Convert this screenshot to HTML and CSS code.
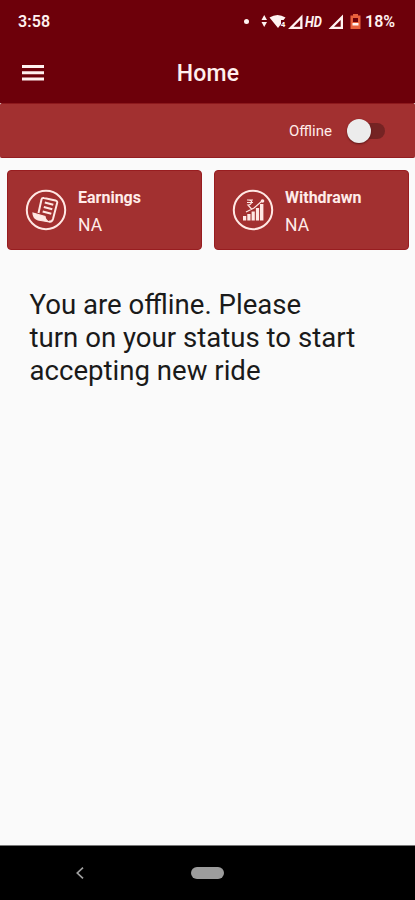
FILE: index.html
```html
<!DOCTYPE html>
<html lang="en">
<head>
<meta charset="utf-8">
<title>Home</title>
<link rel="stylesheet" href="styles.css">
</head>
<body>
<div class="screen">
  <header class="top">
    <div class="status">
      <span class="clock">3:58</span>
      <svg class="signals" width="122" height="20" viewBox="0 0 122 20" fill="#fff3f1">
        <circle cx="7.5" cy="10.5" r="2.5"/>
        <path d="M22.5 9L25.2 4L28 9ZM22.5 11L25.2 16L28 11Z"/>
        <path d="M30.5 6.4Q38.5 1.4 46.5 6.4L44.5 9H42V13L39 17Z"/>
        <text class="wifi-num" x="41.8" y="16">4</text>
        <path fill-rule="evenodd" d="M63.5 3.5V18H49ZM61.2 9L54.5 15.8H61.2Z"/>
        <text class="hd" x="66" y="16" textLength="17" lengthAdjust="spacingAndGlyphs">HD</text>
        <path fill-rule="evenodd" d="M104 3.5V18H89.5ZM101.7 9L95 15.8H101.7Z"/>
        <path class="battery" fill-rule="evenodd" d="M114 3H119V4.5H121.5V18H111.5V4.5H114ZM114 7V11H119V7Z"/>
        <path d="M113.5 12H119.5V14.5H113.5Z"/>
      </svg>
      <span class="percent">18%</span>
    </div>
    <div class="bar">
      <svg class="menu" width="22" height="16" viewBox="0 0 22 16" fill="#fff0ef">
        <path d="M0 0H22V3H0ZM0 6.2H22V9.2H0ZM0 12.4H22V15.4H0Z"/>
      </svg>
      <h1>Home</h1>
    </div>
  </header>
  <section class="availability">
    <span>Offline</span>
    <div class="switch"><div class="thumb"></div></div>
  </section>
  <section class="cards">
    <article class="card">
      <svg width="42" height="42" viewBox="0 0 42 42" fill="none" stroke="#ffe8e4">
        <circle cx="21" cy="21" r="19.2" stroke-width="2"/>
        <path d="M13.5 24L16.5 10.5Q17 8.5 19 9L30.5 11.5Q33 12.2 32 14.5L28 30Q27 33.2 24 32.5" stroke-width="2"/>
        <path d="M8 24L20 27.5Q20.5 31.5 24.5 33L13 31Q8 29 8 24Z" fill="#ffe8e4" stroke-width="1.2"/>
        <path d="M19.8 13.5L28.3 15.8M18.8 18L27.3 20.3M17.7 22.5L26.3 24.8" stroke-width="2.2"/>
      </svg>
      <div class="info"><h2>Earnings</h2><p>NA</p></div>
    </article>
    <article class="card">
      <svg width="42" height="42" viewBox="0 0 42 42" fill="none" stroke="#ffe8e4">
        <circle cx="21" cy="21" r="19.2" stroke-width="2"/>
        <path d="M11 27H14.2V31.5H11ZM15.3 25H18.5V31.5H15.3ZM19.6 22.5H22.8V31.5H19.6ZM23.9 19H27.1V31.5H23.9ZM28 15H31.4V31.5H28Z" fill="#ffe8e4" stroke="none"/>
        <path d="M15 11H21M15 13.5H21M16 11Q20 11 19.5 13.5Q19 16 16 16L19.5 20M14 23L22 19L30 12" stroke-width="1.2"/>
        <circle cx="30.5" cy="12" r="1.8" fill="#ffe8e4" stroke="none"/>
      </svg>
      <div class="info"><h2>Withdrawn</h2><p>NA</p></div>
    </article>
  </section>
  <main>
    <p>You are offline. Please<br>turn on your status to start<br>accepting new ride</p>
  </main>
  <footer>
    <svg width="8" height="12" viewBox="0 0 8 12" fill="none" stroke="#a0a0a0" stroke-width="1.7"><path d="M7 .7L1.3 6L7 11.3"/></svg>
    <div class="pill"></div>
  </footer>
</div>
</body>
</html>
```
FILE: styles.css
```css
* { box-sizing: border-box; }
body, h1, h2, p { margin: 0; }
body { background: #fafafa; font-family: Roboto, sans-serif; }
.screen { display: flex; flex-direction: column; height: 900px; width: 415px; }
.top { height: 103px; background: #6d000a; color: #fff0ef; flex: none; }
.status { height: 42px; display: flex; align-items: center; padding: 0 19px 0 18px; font-size: 16px; font-weight: 600; }
.clock { letter-spacing: .1px; }
.signals { margin-left: auto; margin-right: 4px; flex: none; }
.percent { width: 31px; letter-spacing: 0; white-space: nowrap; }
.wifi-num { font-size: 8px; font-weight: 700; }
.hd { font-size: 15px; font-weight: 700; font-style: italic; }
.battery { fill: #e9603c; }
.bar { height: 61px; display: grid; grid-template-columns: 60px 1fr 60px; align-items: center; }
.menu { margin-left: 22px; }
h1 { text-align: center; font-size: 23px; font-weight: 500; line-height: 28px; padding: 2px 0 0 1px; letter-spacing: .2px; }
.availability { height: 55px; flex: none; background: #a23030; border-top: 1px solid #8d181c; border-bottom: 1px solid #931e22; border-radius: 2px; display: flex; align-items: center; justify-content: flex-end; gap: 15px; padding: 1px 30px 0 0; color: #ffece9; font-size: 15px; }
.switch { position: relative; width: 38px; height: 24px; display: flex; align-items: center; }
.switch::before { content: ""; position: absolute; width: 30px; height: 16px; right: 0; border-radius: 8px; background: #752323; }
.thumb { position: relative; width: 24px; height: 24px; border-radius: 50%; background: #ececec; box-shadow: 0 1px 2px #5d1616; }
.cards { display: grid; grid-template-columns: 195px 195px; gap: 12px; padding: 12px 7px 0; flex: none; }
.card { height: 80px; display: flex; align-items: center; padding-left: 17px; gap: 11px; background: #a23030; border: 1px solid #981d20; border-radius: 4px; color: #ffece9; }
.card svg { flex: none; }
.info { padding-top: 4px; }
h2 { font-size: 16px; font-weight: 700; line-height: 24px; }
.info p { font-size: 17.5px; line-height: 28px; margin-top: 1px; }
main { flex: 1; padding: 38px 29.5px; color: #1a1a1a; font-size: 27.6px; font-weight: 400; line-height: 33px; white-space: nowrap; }
footer { height: 55px; flex: none; background: #000; border-top: 1px solid #777; display: grid; grid-template-columns: 76px 8px 1fr; align-items: center; }
footer svg { grid-column: 2; }
.pill { width: 33px; height: 12px; margin-left: 107px; border-radius: 6px; background: #9c9c9c; }
```
